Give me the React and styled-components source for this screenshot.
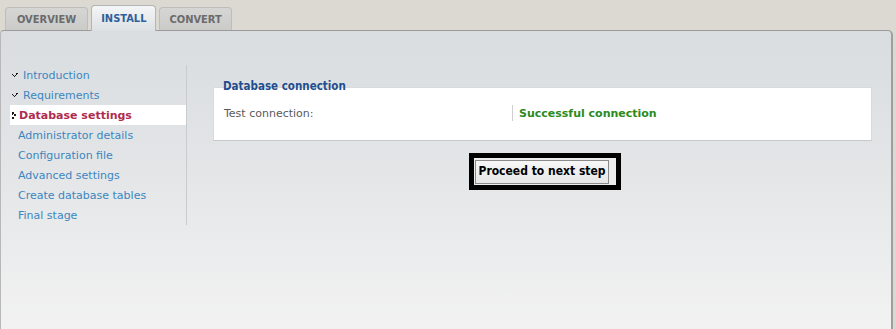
import React from "react";
import styled, { createGlobalStyle, css } from "styled-components";

const Global = createGlobalStyle`
  html, body { margin: 0; padding: 0; }
  body {
    background: #dcd9d2;
    font-family: "DejaVu Sans", Verdana, sans-serif;
    font-size: 11px;
    width: 896px;
    height: 329px;
    overflow: hidden;
  }
`;

const Page = styled.div`
  display: flex;
  flex-direction: column;
  height: 329px;
`;

const TabBar = styled.div`
  display: flex;
  align-items: flex-end;
  gap: 3px;
  height: 31px;
  padding-left: 5px;
  position: relative;
  z-index: 2;
`;

const Tab = styled.div`
  height: 22px;
  padding: 0 ${(p) => p.$pad || 10}px;
  display: flex;
  align-items: center;
  font-family: "DejaVu Sans Condensed", "DejaVu Sans", sans-serif;
  font-weight: bold;
  font-size: 11px;
  color: #6b6b6b;
  background: linear-gradient(#d6d6d4, #cbcbca);
  border: 1px solid #bdbdbb;
  border-bottom: none;
  border-radius: 4px 4px 0 0;
  margin-bottom: 1px;
  ${(p) =>
    p.$active &&
    css`
      height: 25px;
      margin-bottom: 0;
      color: #2d609c;
      background: linear-gradient(#f4f5f6, #dde1e4);
      border-color: #b4b4b4;
    `}
`;

const Panel = styled.div`
  flex: 1;
  width: 893px;
  box-sizing: border-box;
  margin-top: -1px;
  border-top: 1px solid #9c9c9c;
  border-right: 2px solid #9e9e9e;
  border-left: 1px solid #b8b8b8;
  border-radius: 4px 5px 0 0;
  background: linear-gradient(#d9dde0 0%, #e3e5e7 45%, #f2f2f2 100%);
  display: flex;
  align-items: flex-start;
  padding: 34px 19px 0 9px;
`;

const Sidebar = styled.ul`
  list-style: none;
  margin: 0;
  padding: 0;
  width: 176px;
  border-right: 1px solid #c9cbcd;
  flex: none;
`;

const Item = styled.li`
  height: 20px;
  display: flex;
  align-items: center;
  padding-left: ${(p) => (p.$bullet ? "2px" : "8px")};
  gap: 5px;
  color: #3b86c0;
  font-size: 11px;
  ${(p) =>
    p.$active &&
    css`
      background: #fff;
      color: #b02c4f;
      font-weight: bold;
      gap: 2px;
    `}
`;

const Main = styled.div`
  flex: 1;
  margin-left: 26px;
  padding-top: 14px;
  display: flex;
  flex-direction: column;
`;

const Legend = styled.div`
  position: relative;
  z-index: 1;
  margin: 0 0 -6px 10px;
  line-height: 14px;
  font-family: "DejaVu Sans Condensed", "DejaVu Sans", sans-serif;
  font-weight: bold;
  font-size: 11.5px;
  color: #1f4e8e;
`;

const Fieldset = styled.div`
  background: #fff;
  border: 1px solid #d9dadb;
  border-bottom-color: #c7c8c9;
  padding: 17px 10px 19px;
`;

const Row = styled.div`
  display: grid;
  grid-template-columns: 288px 1fr;
  align-items: center;
  height: 16px;
`;

const Label = styled.div`
  color: #5a5a5a;
  font-size: 11px;
`;

const Value = styled.div`
  border-left: 1px solid #cfcfcf;
  height: 16px;
  display: flex;
  align-items: center;
  padding-left: 6px;
  color: #2b8a21;
  font-weight: bold;
  font-size: 11px;
`;

const Actions = styled.div`
  display: flex;
  justify-content: center;
  margin-top: 12px;
`;

const FocusBox = styled.div`
  border: 5px solid #000;
  padding: 2px 7px 1px 1px;
  background: #ececec;
  margin-left: 5px;
`;

const Button = styled.button`
  font-family: "DejaVu Sans Condensed", "DejaVu Sans", sans-serif;
  font-weight: bold;
  font-size: 12px;
  color: #000;
  background: linear-gradient(#f7f7f7, #e6e6e6);
  border: 1px solid #8a8a8a;
  padding: 3px 2px 4px;
  margin: 0;
  line-height: 15px;
`;

const Check = () => (
  <svg width="6" height="5" viewBox="0 0 6 5">
    <path d="M0 1h1v1H0zM1 2h1v1H1zM2 3h1v1H2zM3 2h1v1H3zM4 1h1v1H4zM5 0h1v1H5zM4 0h1v1H4z" fill="#1a1a1a" />
  </svg>
);

const Arrow = () => (
  <svg width="5" height="7" viewBox="0 0 5 7">
    <path d="M0 0h2v2H0zM2 2h2v2H2zM0 5h2v2H0zM0 2h1v1H0z" fill="#1a1a1a" />
  </svg>
);

const steps = [
  { label: "Introduction", state: "done" },
  { label: "Requirements", state: "done" },
  { label: "Database settings", state: "active" },
  { label: "Administrator details" },
  { label: "Configuration file" },
  { label: "Advanced settings" },
  { label: "Create database tables" },
  { label: "Final stage" },
];

export default function App() {
  return (
    <Page>
      <Global />
      <TabBar>
        <Tab $pad={11}>OVERVIEW</Tab>
        <Tab $active $pad={9}>INSTALL</Tab>
        <Tab $pad={9}>CONVERT</Tab>
      </TabBar>
      <Panel>
        <Sidebar>
          {steps.map((s) => (
            <Item key={s.label} $bullet={!!s.state} $active={s.state === "active"}>
              {s.state === "done" && <Check />}
              {s.state === "active" && <Arrow />}
              {s.label}
            </Item>
          ))}
        </Sidebar>
        <Main>
          <Legend>Database connection</Legend>
          <Fieldset>
            <Row>
              <Label>Test connection:</Label>
              <Value>Successful connection</Value>
            </Row>
          </Fieldset>
          <Actions>
            <FocusBox>
              <Button>Proceed to next step</Button>
            </FocusBox>
          </Actions>
        </Main>
      </Panel>
    </Page>
  );
}
